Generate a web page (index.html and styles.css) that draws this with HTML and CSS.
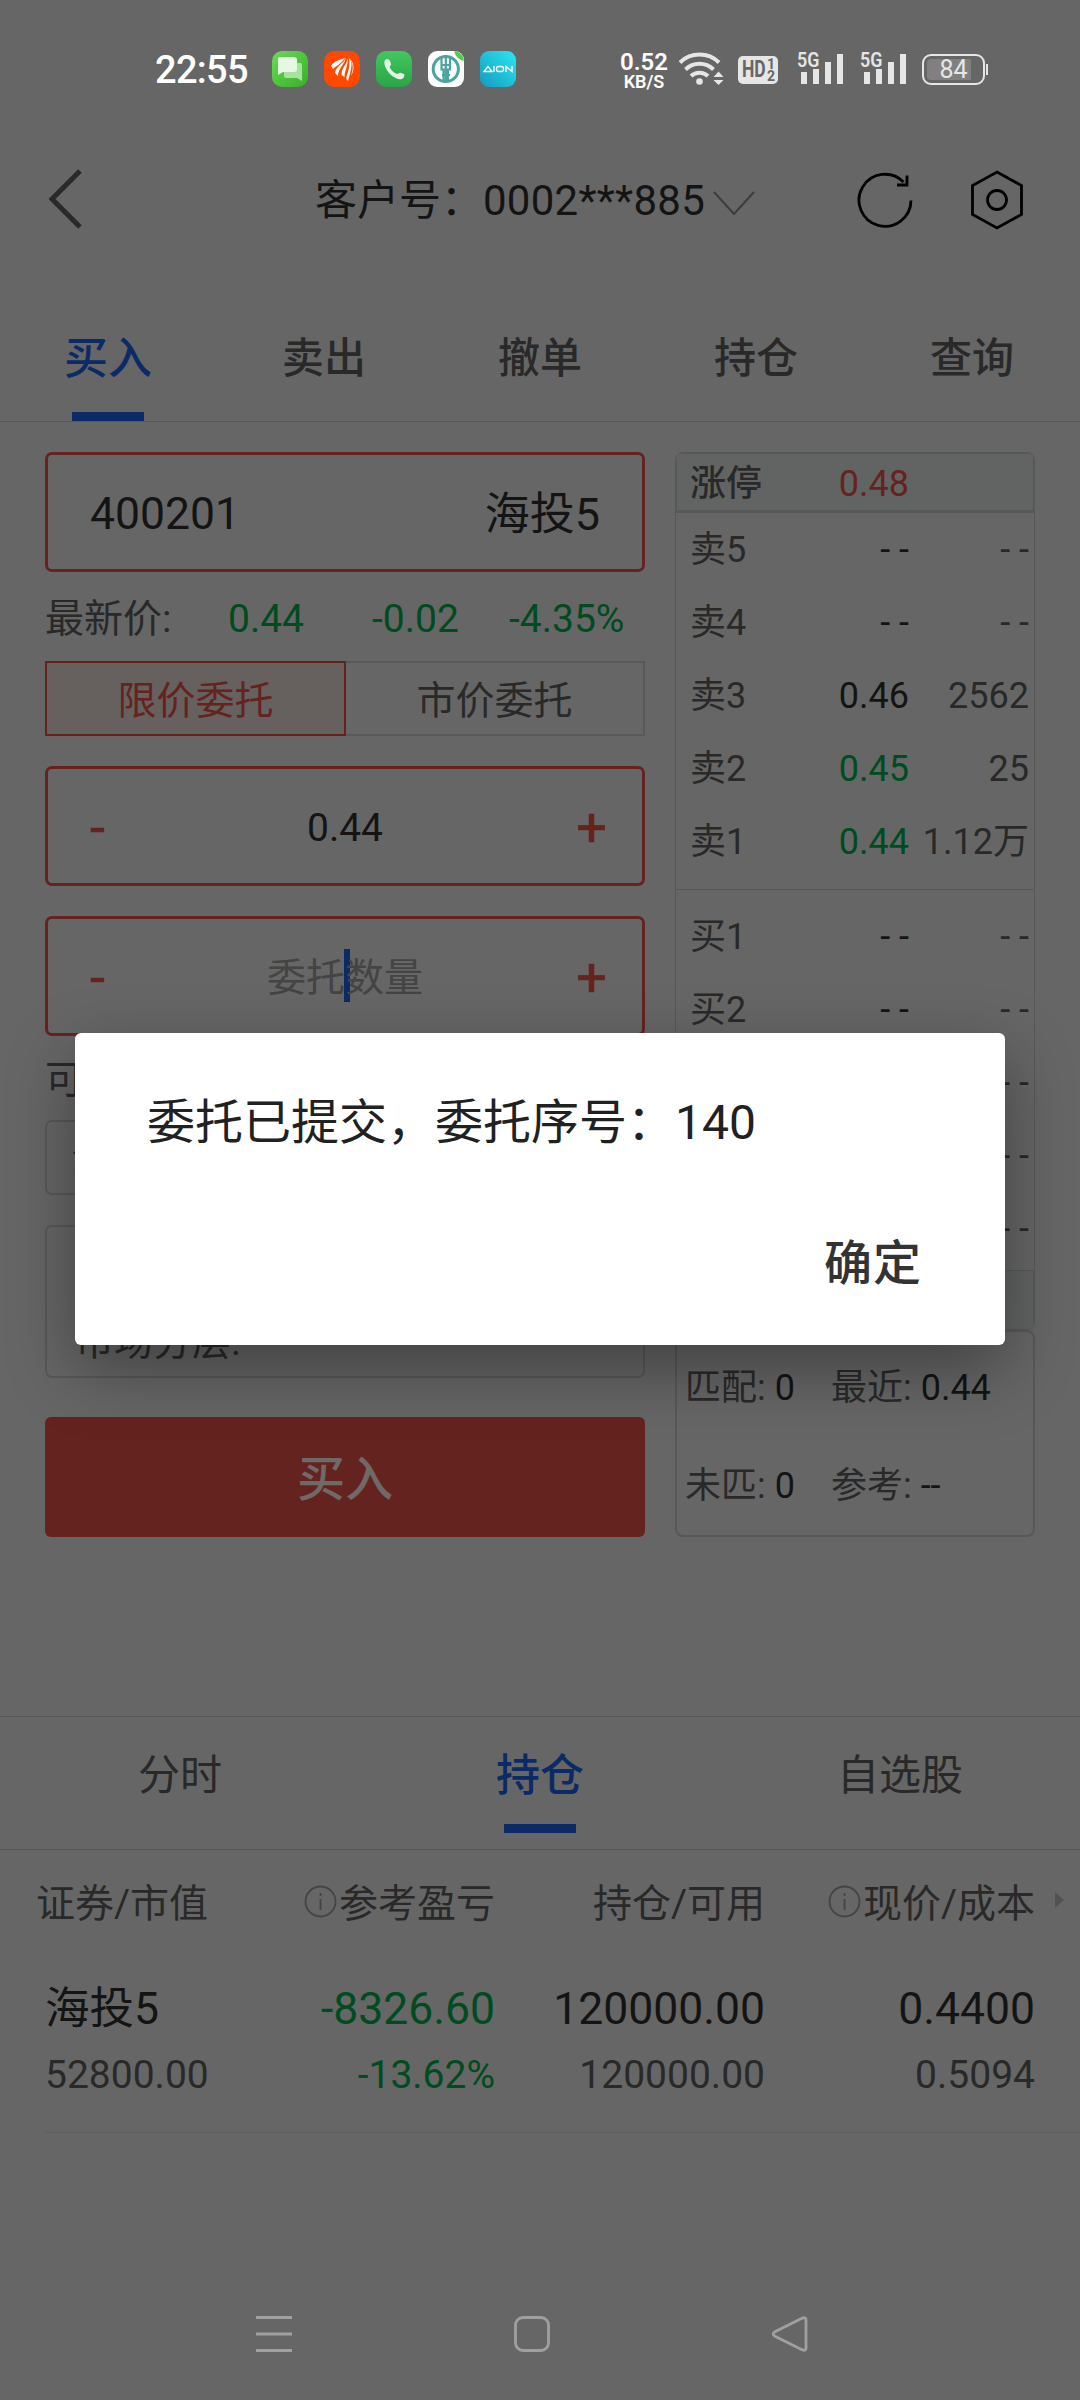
FILE: index.html
```html
<!DOCTYPE html>
<html lang="zh-CN">
<head>
<meta charset="utf-8">
<title>委托交易</title>
<link rel="stylesheet" href="styles.css">
</head>
<body>
<div class="screen">
  <div class="statusbar">
    <span class="clock">22:55</span>
    <div class="apps">
      <svg width="36" height="36" viewBox="0 0 36 36"><defs><linearGradient id="msg" x1="0" y1="0" x2="1" y2="1"><stop offset="0" stop-color="#68dc55"/><stop offset="1" stop-color="#39ae28"/></linearGradient></defs><rect width="36" height="36" rx="10" fill="url(#msg)"/><path d="M14 12h14a2 2 0 0 1 2 2v16l-5-3H14a2 2 0 0 1-2-2V14a2 2 0 0 1 2-2z" fill="#a7e39c"/><path d="M8 6h14a3 3 0 0 1 3 3v9a3 3 0 0 1-3 3H11l-5 3V8a2 2 0 0 1 2-2z" fill="#e6f8e2"/></svg>
      <svg width="36" height="36" viewBox="0 0 36 36"><rect width="36" height="36" rx="10" fill="#ff4800"/><g fill="#fff"><path d="M21 7C15 9 9 11 7 15l2 3c3-3 8-5 12-11z"/><path d="M22 7c-3 6-10 8-11 15l3 3c0-7 6-11 8-18z"/><path d="M23.500 7c-1 8-6 9-6 17l3 2c0-7 4-11 3-19z"/><path d="M25 7c4 4 3 9-1 23-2-2-2-3-1-6 2-6 3-10 2-17z"/><path d="M26 8c4 6 3 10 1 17 3-5 4-12-1-17z"/></g></svg>
      <svg width="36" height="36" viewBox="0 0 36 36"><defs><linearGradient id="call" x1="0" y1="0" x2="0" y2="1"><stop offset="0" stop-color="#43c760"/><stop offset="1" stop-color="#2ba448"/></linearGradient></defs><rect width="36" height="36" rx="10" fill="url(#call)"/><path d="M9 9c2-2 4-1 5 1l1 3c0 2-2 2-1 4 2 3 4 5 7 6 2 0 2-2 4-1l3 1c1 1 0 4-2 5-3 1-8-1-12-5S7 12 9 9z" fill="#e2f5e5"/></svg>
      <svg width="36" height="36" viewBox="0 0 36 36"><rect width="36" height="36" rx="9" fill="#fff"/><path d="M26 0a10 10 0 0 1 10 10q-8-2-10-10z" fill="#58c94e"/><circle cx="17.800" cy="18" r="12.600" fill="none" stroke="#4ba59f" stroke-width="3"/><path d="M13.500 7v11.500h8.500V7M17.800 4v28M14 14h8M15.500 19v11M20 19v11M14 24h8" fill="none" stroke="#4ba59f" stroke-width="2.200"/></svg>
      <svg width="36" height="36" viewBox="0 0 36 36"><defs><linearGradient id="aion" x1="1" y1="0" x2="0" y2="1"><stop offset="0" stop-color="#2ce6f2"/><stop offset="1" stop-color="#149ac0"/></linearGradient></defs><rect width="36" height="36" rx="9" fill="url(#aion)"/><g fill="none" stroke="#fff" stroke-width="1.300"><path d="M4 20.500 8 15.500l4 5zM14 15v6"/><rect x="16.500" y="15.500" width="7" height="5" rx="2"/><path d="M26 21v-5.500l6 5V15"/></g></svg>
    </div>
    <div class="speed"><span class="rate">0.52</span><span class="unit">KB/S</span></div>
    <svg class="wifi" width="46" height="36" viewBox="0 0 46 36"><g fill="none" stroke="#e6e6e6" stroke-width="4"><path d="M1 11.500a28 28 0 0 1 39 0"/><path d="M6.500 18.500a20 20 0 0 1 28 0"/><path d="M12 25a12.500 12.500 0 0 1 17 0"/></g><circle cx="20.500" cy="30.500" r="3.300" fill="#e6e6e6"/><path d="M34.500 26l5-5.500 5 5.500zM34.500 29h10l-5 5z" fill="#e6e6e6"/></svg>
    <div class="hd"><span class="hd-text">HD</span><span class="hd-sims"><i>1</i><i>2</i></span></div>
    <div class="signal s1"><span>5G</span><svg width="46" height="32" viewBox="0 0 46 32"><path d="M4 20h6v12H4zM16 17h6v15h-6zM28 10h6v22h-6zM40 2h6v30h-6z" fill="#e6e6e6"/></svg></div>
    <div class="signal s2"><span>5G</span><svg width="46" height="32" viewBox="0 0 46 32"><path d="M4 20h6v12H4zM16 17h6v15h-6zM28 10h6v22h-6zM40 2h6v30h-6z" fill="#e6e6e6"/></svg></div>
    <div class="battery"><span>84</span></div>
  </div>

  <header class="header">
    <svg class="back" width="34" height="60" viewBox="0 0 34 60"><path d="M31 2 3 30l28 28" fill="none" stroke="#292929" stroke-width="5"/></svg>
    <span class="account">客户号：<span class="digits">0002***885</span></span>
    <svg class="caret-down" width="42" height="25" viewBox="0 0 42 25"><path d="M1 1l20 22L41 1" fill="none" stroke="#3d3d3d" stroke-width="2"/></svg>
    <svg class="refresh" width="58" height="58" viewBox="0 0 58 58"><path d="M55 29.500A26 26 0 1 1 47.500 11" fill="none" stroke="#000" stroke-width="2.800"/><path d="M51 4.500V14H41" fill="none" stroke="#000" stroke-width="2.800"/></svg>
    <svg class="settings" width="54" height="60" viewBox="0 0 54 60"><path d="M27 2 51.500 15.500v29L27 58 2.500 44.500v-29z" fill="none" stroke="#000" stroke-width="2.800"/><circle cx="27" cy="30" r="9.500" fill="none" stroke="#000" stroke-width="2.800"/></svg>
  </header>

  <nav class="tabs">
    <span class="tab active">买入</span><span class="tab">卖出</span><span class="tab">撤单</span><span class="tab">持仓</span><span class="tab">查询</span>
  </nav>

  <main class="trade">
    <section class="order">
      <div class="field stock"><span>400201</span><span class="stock-name">海投5</span></div>
      <div class="quote"><span class="q-label">最新价:</span><span class="q-price">0.44</span><span class="q-diff">-0.02</span><span class="q-pct">-4.35%</span></div>
      <div class="types"><span class="type on">限价委托</span><span class="type">市价委托</span></div>
      <div class="field stepper price"><b>-</b><span>0.44</span><b class="plus">+</b></div>
      <div class="field stepper amount"><b>-</b><span class="placeholder">委托数量<i class="cursor"></i></span><b class="plus">+</b></div>
      <div class="available">可买</div>
      <div class="portion">全仓</div>
      <div class="info">市场分层:</div>
      <div class="buy">买入</div>
    </section>
    <section class="book">
      <div class="depth">
        <div class="limit top"><span>涨停</span><span class="px up">0.48</span></div>
        <div class="levels sell">
          <div class="level"><span>卖5</span><span class="px">- -</span><span class="vol">- -</span></div>
          <div class="level"><span>卖4</span><span class="px">- -</span><span class="vol">- -</span></div>
          <div class="level"><span>卖3</span><span class="px">0.46</span><span class="vol">2562</span></div>
          <div class="level"><span>卖2</span><span class="px down">0.45</span><span class="vol">25</span></div>
          <div class="level"><span>卖1</span><span class="px down">0.44</span><span class="vol">1.12万</span></div>
        </div>
        <div class="levels bid">
          <div class="level"><span>买1</span><span class="px">- -</span><span class="vol">- -</span></div>
          <div class="level"><span>买2</span><span class="px">- -</span><span class="vol">- -</span></div>
          <div class="level"><span>买3</span><span class="px">- -</span><span class="vol">- -</span></div>
          <div class="level"><span>买4</span><span class="px">- -</span><span class="vol">- -</span></div>
          <div class="level"><span>买5</span><span class="px">- -</span><span class="vol">- -</span></div>
        </div>
        <div class="limit bottom"></div>
      </div>
      <div class="match">
        <span>匹配: <em>0</em></span><span>最近: <em>0.44</em></span>
        <span>未匹: <em>0</em></span><span>参考: <em>--</em></span>
      </div>
    </section>
  </main>

  <nav class="subtabs"><span class="subtab">分时</span><span class="subtab active">持仓</span><span class="subtab">自选股</span></nav>

  <section class="holdings">
    <div class="cols head">
      <span class="first">证券/市值</span>
      <span><svg width="33" height="33" viewBox="0 0 33 33"><circle cx="16.500" cy="16.500" r="15" fill="none" stroke="#444" stroke-width="1.800"/><path d="M16.500 14v11M16.500 8v3" stroke="#444" stroke-width="1.800"/></svg>参考盈亏</span>
      <span>持仓/可用</span>
      <span><svg width="33" height="33" viewBox="0 0 33 33"><circle cx="16.500" cy="16.500" r="15" fill="none" stroke="#444" stroke-width="1.800"/><path d="M16.500 14v11M16.500 8v3" stroke="#444" stroke-width="1.800"/></svg>现价/成本</span>
      <svg class="more" width="9" height="16" viewBox="0 0 9 16"><path d="M0 0l9 8-9 8z" fill="#525252"/></svg>
    </div>
    <div class="holding">
      <div class="cols big"><span>海投5</span><span class="down">-8326.60</span><span>120000.00</span><span>0.4400</span></div>
      <div class="cols small"><span>52800.00</span><span class="down">-13.62%</span><span>120000.00</span><span>0.5094</span></div>
    </div>
  </section>

  <footer class="sysnav">
    <svg width="36" height="36" viewBox="0 0 36 36"><path d="M0 1.500h36M0 18h36M0 34.500h36" stroke="#a0a0a0" stroke-width="2.800"/></svg>
    <svg width="36" height="36" viewBox="0 0 36 36"><rect x="1.500" y="1.500" width="33" height="33" rx="7.500" fill="none" stroke="#a0a0a0" stroke-width="2.800"/></svg>
    <svg width="36" height="36" viewBox="0 0 36 36"><path d="M30.500 2 2.500 16q-2.500 2 0 4l28 14q3.500 1 3.500-2V4q0-3-3.500-2z" fill="none" stroke="#a0a0a0" stroke-width="2.800"/></svg>
  </footer>

  <div class="dialog" role="dialog">
    <p class="message">委托已提交，委托序号：140</p>
    <span class="confirm">确定</span>
  </div>
</div>
</body>
</html>
```

FILE: styles.css
```css
* { box-sizing: border-box; }

body {
  margin: 0;
  background: #666;
  font-family: Roboto, "Noto Sans CJK SC", sans-serif;
  line-height: 1.2;
  color: #292929;
}

svg { display: block; flex: none; }
span { white-space: nowrap; }
i, em { font-style: normal; }

.screen {
  position: relative;
  width: 1080px;
  height: 2400px;
  overflow: hidden;
  display: flex;
  flex-direction: column;
}

.down { color: #004b20 !important; }
.up { color: #652320 !important; }

/* system status bar */
.statusbar {
  height: 140px;
  padding: 51px 0 0 155px;
  display: flex;
  align-items: flex-start;
  color: #fff;
}
.clock { width: 117px; font-size: 38px; line-height: 39px; font-weight: 500; letter-spacing: -.7px; }
.apps { display: flex; gap: 16px; }
.speed {
  width: 50px;
  margin-left: 103px;
  display: flex;
  flex-direction: column;
  align-items: center;
  font-weight: 600;
}
.rate { font-size: 24px; line-height: 22px; }
.unit { font-size: 18px; line-height: 17px; }
.wifi { margin-left: 10px; }
.hd {
  width: 40px;
  height: 28px;
  margin: 5px 0 0 13px;
  padding-left: 4px;
  border-radius: 5px;
  background: #e6e6e6;
  color: #666;
  font-weight: 700;
  display: flex;
}
.hd-text { width: 25px; font-size: 23px; line-height: 28px; transform: scaleX(.76); transform-origin: left; }
.hd-sims { display: flex; flex-direction: column; font-size: 14px; line-height: 12px; padding-top: 2px; }
.signal { position: relative; width: 46px; margin: 1px 0 0 19px; color: #e6e6e6; }
.signal span { position: absolute; left: 0; top: 0; font-size: 21px; line-height: 16px; font-weight: 600; transform: scaleX(.85); transform-origin: left; }
.s2 { margin-left: 17px; }
.battery {
  position: relative;
  width: 63px;
  height: 31px;
  margin: 3px 0 0 16px;
  border: 2px solid #e6e6e6;
  border-radius: 9px;
  background: linear-gradient(90deg, #808080 83%, #666 83%) content-box;
  padding: 3px;
  text-align: center;
  color: #e6e6e6;
  font-size: 25px;
  line-height: 22px;
}
.battery::after { content: ""; position: absolute; right: -5px; top: 8px; width: 2px; height: 11px; background: #e6e6e6; }

/* page header */
.header { height: 122px; padding: 0 56px 2px 49px; display: flex; align-items: center; }
.back { margin-bottom: 2px; }
.account { margin: 2px 0 0 232px; width: 391px; font-size: 42px; line-height: 60px; color: #141414; }
.digits { letter-spacing: .25px; }
.caret-down { margin: 6px 0 0 7px; }
.refresh { margin-left: 101px; }
.settings { margin-left: 56px; }

.tabs { height: 160px; padding-top: 33px; display: flex; border-bottom: 1px solid #575757; }
.tab {
  flex: 1;
  display: flex;
  justify-content: center;
  padding-top: 29px;
  position: relative;
  font-size: 42px;
  line-height: 70px;
  font-weight: 500;
}
.tab.active { font-size: 44px; color: #0c2a66; }
.tab.active::after, .subtab.active::after {
  content: "";
  position: absolute;
  bottom: 0;
  left: 50%;
  width: 72px;
  height: 9px;
  margin-left: -36px;
  background: #0c2a66;
}

.trade { height: 1294px; padding: 30px 45px 0; display: flex; gap: 30px; align-items: flex-start; }

/* order form */
.order { width: 600px; }
.field {
  height: 120px;
  border: 3px solid #652320;
  border-radius: 7px;
  padding: 5px 42px 0;
  display: flex;
  align-items: center;
  justify-content: space-between;
  color: #141414;
}
.stock { font-size: 44.5px; }
.stock-name { font-size: 45px; }
.quote { height: 89px; padding-top: 6px; display: flex; align-items: center; font-size: 39px; color: #004b20; }
.q-label { width: 183px; color: #292929; }
.q-price { width: 144px; }
.q-diff { width: 137px; }
.types { height: 75px; display: flex; }
.type {
  flex: 1;
  display: flex;
  align-items: center;
  justify-content: center;
  padding-top: 5px;
  border: 2px solid #595959;
  border-left: 0;
  font-size: 39px;
}
.type.on { border: 2px solid #652320; background: #66605f; color: #652320; }
.stepper { margin-top: 30px; padding: 5px 35px 0; font-size: 39px; }
.stepper b { width: 40px; padding-left: 7px; color: #652320; font-size: 54px; font-weight: 400; -webkit-text-stroke: .6px #652320; }
.stepper b.plus { padding: 0; text-align: right; }
.stepper span { position: relative; }
.placeholder { color: #444; }
.cursor { position: absolute; left: 77px; top: -6px; width: 6px; height: 53px; background: #0c2a66; z-index: -1; }
.available { height: 84px; line-height: 88px; font-size: 39px; }
.portion, .info { border: 2px solid #585858; border-radius: 7px; font-size: 39px; }
.portion { height: 75px; padding-left: 25px; line-height: 70px; }
.info { height: 153px; margin-top: 30px; padding: 82px 0 0 28px; line-height: 66px; }
.buy {
  height: 120px;
  margin-top: 39px;
  border-radius: 6px;
  background: #652320;
  color: #706967;
  font-size: 48px;
  font-weight: 500;
  line-height: 126px;
  text-align: center;
}

/* order book */
.book { width: 360px; font-size: 36px; }
.depth { height: 878px; border: 1px solid #585858; border-radius: 8px; overflow: hidden; }
.limit { background: #616463; border: 1px solid #585858; display: flex; align-items: center; }
.limit.top { height: 60px; padding: 5px 0 0 13px; border-bottom-width: 3px; font-weight: 500; }
.limit.top .px { width: 147px; font-weight: 400; }
.limit.bottom { height: 60px; }
.level { height: 73px; padding: 3px 5px 0 14px; display: flex; align-items: center; }
.level > span:first-child { width: 71px; }
.px { width: 148px; text-align: right; color: #141414; }
.vol { flex: 1; text-align: right; }
.levels.sell { height: 377px; border-bottom: 1px solid #585858; }
.levels.bid { height: 380px; padding-top: 10px; }
.match {
  height: 207px;
  border: 2px solid #585858;
  border-radius: 8px;
  padding: 8px 0 0 8px;
  display: grid;
  grid-template-columns: 146px 1fr;
  grid-auto-rows: 98px;
  align-items: center;
}
.match em { color: #141414; }

/* holdings */
.subtabs { height: 134px; display: flex; border-top: 1px solid #585858; border-bottom: 1px solid #585858; }
.subtab { flex: 1; position: relative; text-align: center; font-size: 42px; line-height: 118px; }
.subtab.active { font-size: 44px; font-weight: 500; color: #0c2a66; }
.subtab.active::after { bottom: 16px; }
.cols { display: grid; grid-template-columns: 180px 270px 270px 270px; padding-left: 45px; }
.cols > span { display: flex; justify-content: flex-end; align-items: center; }
.cols > span:first-child { justify-content: flex-start; }
.cols.head { height: 108px; align-items: center; grid-template-columns: 180px 270px 270px 270px 29px; font-size: 39px; }
.head svg { margin: -4px 2px 0 0; }
.head .first { margin-left: -9px; }
.head .more { justify-self: end; margin: -8px 0 0; }
.holding { height: 175px; padding-top: 18px; background: linear-gradient(#5e5e5e, #5e5e5e) 45px 100% / 100% 1px no-repeat; }
.big { height: 68px; font-size: 44.5px; color: #141414; }
.small { height: 62px; font-size: 39px; }

/* system navigation */
.sysnav { margin-top: 183px; padding: 0 272px 0 256px; display: flex; justify-content: space-between; }

/* order result dialog */
.dialog {
  position: absolute;
  left: 75px;
  top: 1033px;
  width: 930px;
  height: 312px;
  padding: 54px 83px 0 72px;
  display: flex;
  flex-direction: column;
  background: #fff;
  border-radius: 6px;
  box-shadow: 0 24px 66px rgba(0, 0, 0, .36);
  font-size: 48px;
  line-height: 72px;
  color: #212121;
}
.message { margin: 0; }
.confirm { margin-top: 69px; align-self: flex-end; font-weight: 500; letter-spacing: 1px; color: #333; }
```
